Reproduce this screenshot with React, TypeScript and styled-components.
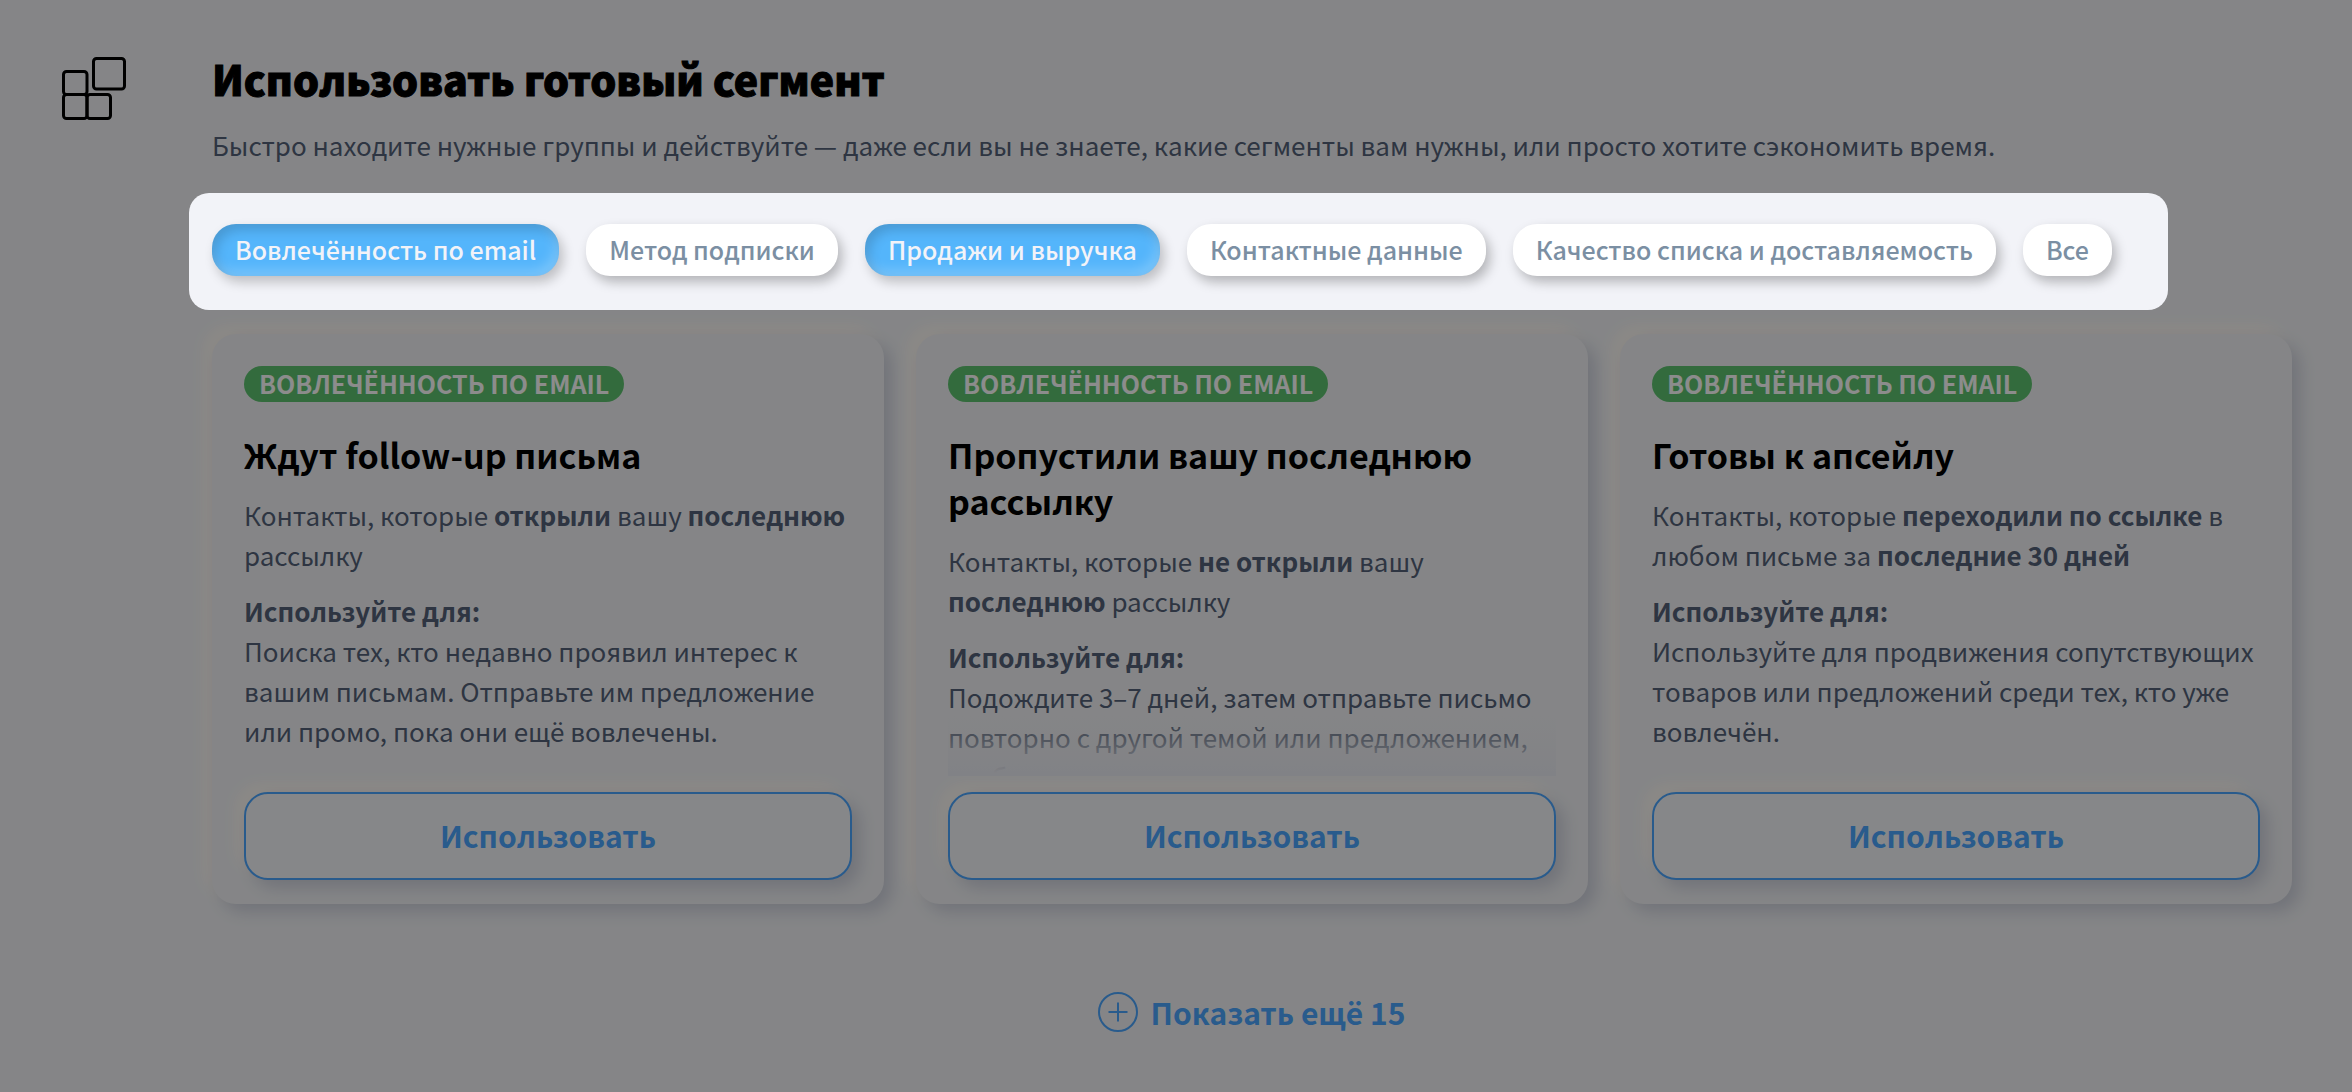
import React, { useState } from "react";
import styled, { createGlobalStyle, css } from "styled-components";

const GlobalStyle = createGlobalStyle`
  *, *::before, *::after { box-sizing: border-box; }
  body {
    margin: 0;
    background: #f2f3f6;
    color: #546278;
    font-family: "Noto Sans CJK SC", "Noto Sans", sans-serif;
    font-size: 26px;
    line-height: 40px;
  }
  button { font-family: inherit; cursor: pointer; }
`;

const Page = styled.main`
  display: grid;
  grid-template-columns: 68px minmax(0, 1fr);
  column-gap: 84px;
  min-height: 100vh;
  padding: 48px 60px;
  overflow: hidden;
`;

const BlocksIcon = styled.svg`
  width: 68px;
  height: 68px;
  margin-top: 8px;
  fill: none;
  stroke: #000;
  stroke-width: 3;
`;

const Title = styled.h1`
  margin: 0 0 17px;
  color: #000;
  font-size: 41px;
  line-height: 60px;
  font-weight: 900;
  -webkit-text-stroke: 1px #000;
`;

const Subtitle = styled.p`
  margin: 0 0 28px;
`;

const Spotlight = styled.div`
  position: relative;
  z-index: 1;
  display: flex;
  flex-wrap: wrap;
  gap: 27px;
  width: fit-content;
  margin: 0 0 24px -23px;
  padding: 31px 56px 34px 23px;
  border-radius: 20px;
  background: #f2f3f8;
  box-shadow: 0 0 0 200vmax rgba(0, 0, 0, 0.45);
`;

const Chip = styled.button<{ $active: boolean }>`
  height: 52px;
  padding: 0 23px 2px;
  border: 0;
  border-radius: 24px;
  background: #fff;
  color: #7b8fa3;
  font-size: 25px;
  line-height: 50px;
  font-weight: 500;
  white-space: nowrap;
  box-shadow: 4px 6px 12px rgba(0, 0, 0, 0.26);
  ${(p) =>
    p.$active &&
    css`
      background: #54b5fb;
      color: #f2f3f8;
      box-shadow: 4px 6px 12px rgba(0, 0, 0, 0.22),
        inset 4px 6px 12px rgba(0, 0, 0, 0.16),
        inset -4px -6px 12px rgba(255, 255, 255, 0.22);
    `}
`;

const Cards = styled.div`
  display: grid;
  grid-template-columns: repeat(3, minmax(0, 1fr));
  gap: 32px;
`;

const Card = styled.article`
  display: flex;
  flex-direction: column;
  align-items: flex-start;
  padding: 32px 32px 24px;
  border-radius: 24px;
  background: #f2f3f6;
  box-shadow: 8px 8px 16px #cfd2dd, -8px -8px 16px #fffaf4;
`;

const Badge = styled.span`
  height: 36px;
  margin-bottom: 26px;
  padding: 0 15px;
  border-radius: 18px;
  background: #5dc36f;
  color: #fff;
  font-size: 25px;
  line-height: 34px;
  font-weight: 700;
  text-transform: uppercase;
`;

const CardBody = styled.div<{ $faded?: boolean }>`
  position: relative;
  width: 100%;
  height: 348px;
  padding-top: 4px;
  overflow: hidden;
  ${(p) =>
    p.$faded &&
    css`
      &::after {
        content: "";
        position: absolute;
        inset: auto 0 0;
        height: 60px;
        background: linear-gradient(rgba(236, 237, 244, 0), #ecedf4 95%);
      }
    `}
`;

const CardTitle = styled.h2`
  margin: 0 0 17px;
  color: #000;
  font-size: 34px;
  line-height: 46px;
  font-weight: 700;
`;

const Text = styled.p`
  margin: 0 0 16px;
`;

const UseButton = styled.button`
  width: 100%;
  height: 88px;
  margin-top: 16px;
  padding: 0 0 2px;
  border: 2px solid #4ca6ff;
  border-radius: 24px;
  background: #f5f6f9;
  color: #4ca6ff;
  font-size: 30px;
  font-weight: 700;
  box-shadow: 8px 8px 16px #cfd2dd, -8px -8px 16px #fffaf4;
`;

const MoreButton = styled.button`
  display: flex;
  align-items: center;
  gap: 12px;
  margin: 88px auto 0;
  padding: 0;
  border: 0;
  background: none;
  color: #4ca6ff;
  font-size: 30px;
  line-height: 38px;
  font-weight: 700;

  svg {
    width: 40px;
    height: 40px;
    fill: none;
    stroke: currentColor;
    stroke-width: 2;
  }
`;

const filters = [
  "Вовлечённость по email",
  "Метод подписки",
  "Продажи и выручка",
  "Контактные данные",
  "Качество списка и доставляемость",
  "Все",
];

interface Segment {
  title: string;
  audience: React.ReactNode;
  advice: string;
  long?: boolean;
}

const segments: Segment[] = [
  {
    title: "Ждут follow-up письма",
    audience: (
      <>
        Контакты, которые <b>открыли</b> вашу <b>последнюю</b> рассылку
      </>
    ),
    advice:
      "Поиска тех, кто недавно проявил интерес к вашим письмам. Отправьте им предложение или промо, пока они ещё вовлечены.",
  },
  {
    title: "Пропустили вашу последнюю рассылку",
    audience: (
      <>
        Контакты, которые <b>не открыли</b> вашу <b>последнюю</b> рассылку
      </>
    ),
    advice:
      "Подождите 3–7 дней, затем отправьте письмо повторно с другой темой или предложением, чтобы",
    long: true,
  },
  {
    title: "Готовы к апсейлу",
    audience: (
      <>
        Контакты, которые <b>переходили по ссылке</b> в любом письме за{" "}
        <b>последние 30 дней</b>
      </>
    ),
    advice:
      "Используйте для продвижения сопутствующих товаров или предложений среди тех, кто уже вовлечён.",
  },
];

export default function App() {
  const [active, setActive] = useState([filters[0], filters[2]]);
  const toggle = (name: string) =>
    setActive((list) =>
      list.includes(name) ? list.filter((n) => n !== name) : [...list, name]
    );

  return (
    <>
      <GlobalStyle />
      <Page>
        <BlocksIcon viewBox="0 0 68 68" aria-hidden="true">
          <rect x="33.500" y="2.500" width="31" height="30.500" rx="3" />
          <rect x="3.500" y="15.500" width="23.500" height="23" rx="3" />
          <rect x="3.500" y="38.500" width="23.500" height="24" rx="3" />
          <rect x="27" y="38.500" width="23.500" height="24" rx="3" />
        </BlocksIcon>
        <section>
          <Title>Использовать готовый сегмент</Title>
          <Subtitle>
            Быстро находите нужные группы и действуйте — даже если вы не знаете,
            какие сегменты вам нужны, или просто хотите сэкономить время.
          </Subtitle>
          <Spotlight>
            {filters.map((name) => (
              <Chip
                key={name}
                type="button"
                $active={active.includes(name)}
                aria-pressed={active.includes(name)}
                onClick={() => toggle(name)}
              >
                {name}
              </Chip>
            ))}
          </Spotlight>
          <Cards>
            {segments.map((s) => (
              <Card key={s.title}>
                <Badge>Вовлечённость по email</Badge>
                <CardBody $faded={s.long}>
                  <CardTitle>{s.title}</CardTitle>
                  <Text>{s.audience}</Text>
                  <Text>
                    <b>Используйте для:</b>
                    <br />
                    {s.advice}
                  </Text>
                </CardBody>
                <UseButton type="button">Использовать</UseButton>
              </Card>
            ))}
          </Cards>
          <MoreButton type="button">
            <svg viewBox="0 0 40 40" aria-hidden="true">
              <circle cx="20" cy="20" r="19" />
              <path d="M20 10.500V29.500M10.500 20H29.500" />
            </svg>
            Показать ещё 15
          </MoreButton>
        </section>
      </Page>
    </>
  );
}
